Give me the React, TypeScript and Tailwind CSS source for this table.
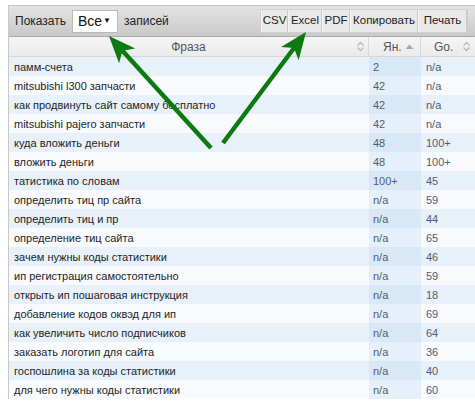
import React from 'react';

const rows: [string, string, string][] = [
  ['памм-счета', '2', 'n/a'],
  ['mitsubishi l300 запчасти', '42', 'n/a'],
  ['как продвинуть сайт самому бесплатно', '42', 'n/a'],
  ['mitsubishi pajero запчасти', '42', 'n/a'],
  ['куда вложить деньги', '48', '100+'],
  ['вложить деньги', '48', '100+'],
  ['татистика по словам', '100+', '45'],
  ['определить тиц пр сайта', 'n/a', '59'],
  ['определить тиц и пр', 'n/a', '44'],
  ['определение тиц сайта', 'n/a', '65'],
  ['зачем нужны коды статистики', 'n/a', '46'],
  ['ип регистрация самостоятельно', 'n/a', '59'],
  ['открыть ип пошаговая инструкция', 'n/a', '18'],
  ['добавление кодов оквэд для ип', 'n/a', '69'],
  ['как увеличить число подписчиков', 'n/a', '64'],
  ['заказать логотип для сайта', 'n/a', '36'],
  ['госпошлина за коды статистики', 'n/a', '40'],
  ['для чего нужны коды статистики', 'n/a', '60'],
];

const SortBoth = () => (
  <svg width="9" height="11" viewBox="0 0 9 11" className="shrink-0">
    <path d="M1.5 4.5 L4.5 1.5 L7.5 4.5" fill="none" stroke="#b8b8b8" strokeWidth="1.3" />
    <path d="M1.5 6.5 L4.5 9.5 L7.5 6.5" fill="none" stroke="#b8b8b8" strokeWidth="1.3" />
  </svg>
);

const SortUp = () => (
  <svg width="9" height="7" viewBox="0 0 9 7" className="shrink-0">
    <path d="M0.5 6 L4.5 1.5 L8.5 6 Z" fill="#a8a8a8" />
  </svg>
);

const Button = ({ label, w }: { label: string; w: string }) => (
  <div className={`${w} h-[22px] flex items-center justify-center bg-[#e9e9e9] border-l border-[#f6f6f6] border-r border-r-[#c9c9c9] text-[#222] text-[11.5px]`}>
    {label}
  </div>
);

const Arrow = ({ x1, y1, x2, y2 }: { x1: number; y1: number; x2: number; y2: number }) => {
  const a = Math.atan2(y2 - y1, x2 - x1);
  const len = 27;
  const w = 11;
  const bx = x2 - Math.cos(a) * len;
  const by = y2 - Math.sin(a) * len;
  const nx = -Math.sin(a);
  const ny = Math.cos(a);
  const notchX = x2 - Math.cos(a) * (len - 7);
  const notchY = y2 - Math.sin(a) * (len - 7);
  return (
    <g>
      <line x1={x1} y1={y1} x2={notchX} y2={notchY} stroke="#0b7a10" strokeWidth="4.5" />
      <polygon
        points={`${x2},${y2} ${bx + nx * w},${by + ny * w} ${notchX},${notchY} ${bx - nx * w},${by - ny * w}`}
        fill="#0b7a10"
      />
    </g>
  );
};

export default function App() {
  return (
    <div className="relative w-[475px] h-[403px] overflow-hidden bg-white pt-[5px] pl-[8px] text-[11px] font-['Liberation_Sans',Arial,sans-serif]">
      <div className="border-l border-[#c8c8c8] w-[467px]">
        {/* toolbar */}
        <div className="h-[32px] flex items-center justify-between border-t border-[#c4c4c4] border-b border-b-[#a9a9a9] bg-gradient-to-b from-[#e3e3e3] to-[#c9c9c9] pl-[6px] pr-[7px]">
          <div className="flex items-center text-[#222] text-[12px]">
            <span>Показать</span>
            <div className="ml-[6px] h-[23px] w-[46px] bg-white border border-[#b9b9b9] flex items-center justify-between pl-[5px] pr-[6px] text-[14px] text-[#111]">
              <span>Все</span>
              <span className="text-[8px]">▼</span>
            </div>
            <span className="ml-[6px]">записей</span>
          </div>
          <div className="flex items-center border border-[#cfcfcf]">
            <Button label="CSV" w="w-[27px]" />
            <Button label="Excel" w="w-[34px]" />
            <Button label="PDF" w="w-[28px]" />
            <Button label="Копировать" w="w-[68px]" />
            <Button label="Печать" w="w-[49px]" />
          </div>
        </div>
        {/* header */}
        <div className="h-[20px] flex items-center bg-gradient-to-b from-[#f5f5f5] to-[#ebebeb] border-b border-[#d6d6d6] text-[#555] text-[12px]">
          <div className="w-[360px] h-full flex items-center pr-[3px] border-r border-[#d9d9d9]">
            <span className="flex-1 text-center pl-[12px]">Фраза</span>
            <SortBoth />
          </div>
          <div className="w-[52px] h-full flex items-center justify-between pl-[14px] pr-[6px] border-r border-[#d9d9d9]">
            <span>Ян.</span>
            <SortUp />
          </div>
          <div className="flex-1 h-full flex items-center justify-between pl-[13px] pr-[4px]">
            <span>Go.</span>
            <SortBoth />
          </div>
        </div>
        {/* rows */}
        {rows.map(([phrase, yan, go], i) => (
          <div
            key={i}
            className={`h-[19px] flex items-center ${i % 2 === 0 ? 'bg-[#e8f0f9]' : 'bg-[#f8fafd]'}`}
          >
            <div className="w-[360px] pl-[5px] pt-[1px] text-[#1e1e1e] whitespace-nowrap">{phrase}</div>
            <div
              className={`w-[52px] h-full flex items-center pl-[4px] pt-[1px] text-[#4e5e72] ${
                i % 2 === 0 ? 'bg-[#d9e8f6]' : 'bg-[#e6f0fa]'
              }`}
            >
              {yan}
            </div>
            <div className="flex-1 pl-[5px] pt-[1px] text-[#4e5e72]">{go}</div>
          </div>
        ))}
      </div>
      <svg className="absolute inset-0 pointer-events-none" width="475" height="403">
        <Arrow x1={211} y1={148} x2={109} y2={36} />
        <Arrow x1={223} y1={143} x2={306} y2={32} />
      </svg>
    </div>
  );
}
